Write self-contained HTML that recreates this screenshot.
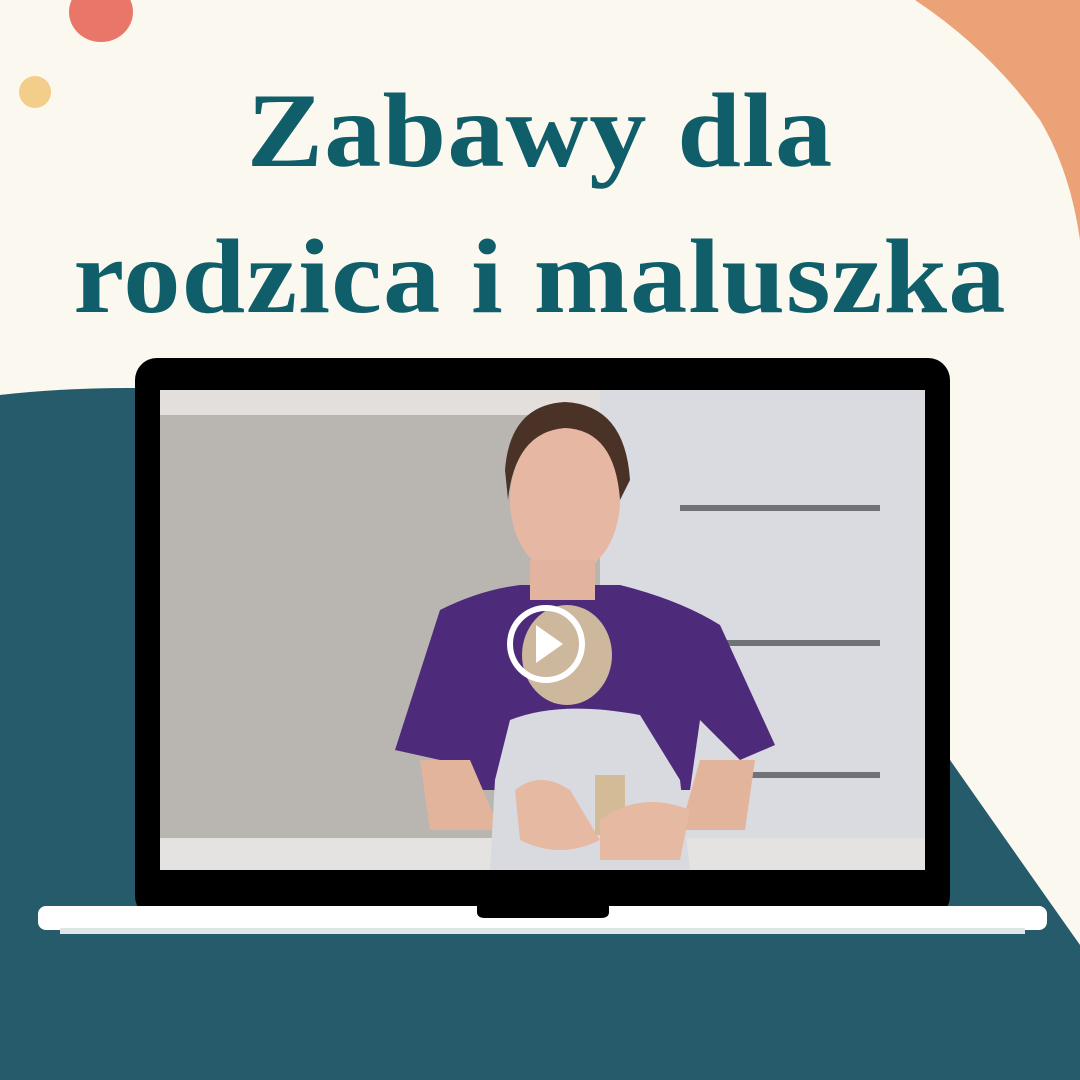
<!DOCTYPE html>
<html><head><meta charset="utf-8"><style>
*{margin:0;padding:0}
body{width:1080px;height:1080px;overflow:hidden;background:#fbf8ef;position:relative;font-family:"Liberation Serif",serif}
.t{position:absolute;left:0;width:1080px;text-align:center;color:#0f5e6a;font-weight:bold;font-size:106px;letter-spacing:1px;transform:scaleX(1.08);transform-origin:540px 0}
</style></head><body>
<svg width="1080" height="1080" style="position:absolute;left:0;top:0">
<path d="M0,395 Q60,388 135,388 L135,1080 L0,1080Z" fill="#255b6b"/>
<path d="M0,395 L135,388 L950,760 Q1020,860 1080,945 L1080,1080 L0,1080Z" fill="#255b6b"/>
<path d="M915,0 L1080,0 L1080,240 Q1070,170 1040,120 Q990,50 915,0Z" fill="#eba276"/>
<ellipse cx="101" cy="12" rx="32" ry="30" fill="#e8776a"/>
<circle cx="35" cy="92" r="16" fill="#f3ce8b"/>
<rect x="135" y="358" width="815" height="560" rx="22" fill="#000"/>
<rect x="160" y="390" width="765" height="480" fill="#bfbcb8"/>
<rect x="160" y="390" width="460" height="480" fill="#b9b6b1"/>
<rect x="600" y="390" width="325" height="480" fill="#dadbe0"/>
<rect x="680" y="505" width="200" height="6" fill="#6f7378"/>
<rect x="720" y="640" width="160" height="6" fill="#6f7378"/>
<rect x="720" y="772" width="160" height="6" fill="#6f7378"/>
<rect x="160" y="390" width="440" height="25" fill="#e2dfdc"/>
<path d="M440,610 Q480,590 520,585 L620,585 Q680,600 720,625 L775,745 L740,760 L700,720 L690,790 L450,790 L440,760 L395,750Z" fill="#4e2a7a"/>
<ellipse cx="565" cy="500" rx="55" ry="75" fill="#e6b8a4"/>
<path d="M505,470 Q510,405 565,402 Q625,405 630,480 L620,500 Q615,430 565,428 Q515,432 508,500Z" fill="#4a3326"/>
<rect x="530" y="560" width="65" height="40" fill="#e2b39e"/>
<path d="M420,760 L470,760 L500,830 L430,830Z" fill="#e3b49c"/>
<path d="M700,760 L755,760 L745,830 L680,830Z" fill="#e3b49c"/>
<rect x="160" y="838" width="765" height="32" fill="#e5e3e1"/>
<ellipse cx="567" cy="655" rx="45" ry="50" fill="#cdb79d"/>
<path d="M510,720 Q560,700 640,715 L680,780 L690,870 L490,870 L495,780Z" fill="#d9dadf"/>
<path d="M515,790 Q540,770 570,790 L600,840 Q560,860 520,840Z" fill="#e6b9a3"/>
<path d="M595,775 L625,775 L625,835 L595,835Z" fill="#d3bb98"/>
<path d="M600,820 Q640,790 690,810 L680,860 L600,860Z" fill="#e6b9a3"/>
<circle cx="546" cy="644" r="36" fill="none" stroke="#fff" stroke-width="6"/>
<path d="M536,625 L563,644 L536,663Z" fill="#fff"/>
<rect x="38" y="906" width="1009" height="24" rx="8" fill="#fff"/>
<rect x="60" y="928" width="965" height="6" fill="#dfe4e6"/>
<path d="M477,906 L609,906 L609,912 Q609,918 601,918 L485,918 Q477,918 477,912Z" fill="#000"/>
</svg>
<div class="t" style="top:70px">Zabawy dla</div>
<div class="t" style="top:216px">rodzica i maluszka</div>
</body></html>
